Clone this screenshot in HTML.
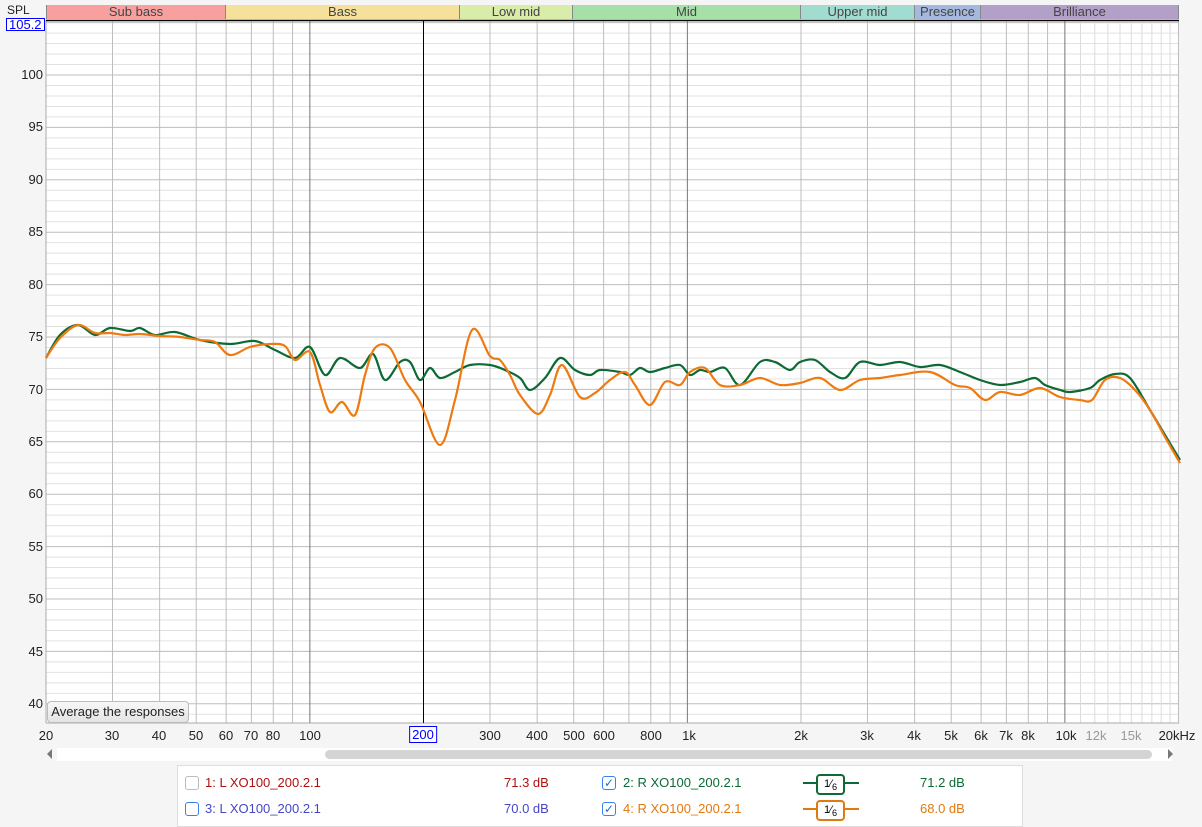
<!DOCTYPE html>
<html><head><meta charset="utf-8"><style>
body{margin:0;width:1202px;height:821px;background:#f5f5f5;font-family:"Liberation Sans",sans-serif;overflow:hidden;position:relative}
.a{position:absolute;white-space:nowrap}
.yl{position:absolute;right:1159px;font-size:13px;color:#222;transform:translateY(-8px)}
.xl{position:absolute;top:728px;font-size:13px;color:#222;transform:translateX(-50%)}
.band{position:absolute;top:5px;height:14px;font-size:13px;color:#444;text-align:center;line-height:14px;border-right:1px solid #888;box-sizing:border-box}
.leg{font-size:13px;position:absolute}
.cb{position:absolute;width:12px;height:12px;border:1px solid #bbb;border-radius:3px;background:#fff}
</style></head><body>
<div class="a" style="left:7px;top:3px;font-size:12px;color:#222">SPL</div>
<div class="band" style="left:46px;width:180px;background:#f8a0a0;border-left:1px solid #888">Sub bass</div>
<div class="band" style="left:226px;width:234px;background:#f5e19c">Bass</div>
<div class="band" style="left:460px;width:113px;background:#d9ecaa">Low mid</div>
<div class="band" style="left:573px;width:228px;background:#a6e0a8">Mid</div>
<div class="band" style="left:801px;width:114px;background:#a2dcd1">Upper mid</div>
<div class="band" style="left:915px;width:66px;background:#a5b8de">Presence</div>
<div class="band" style="left:981px;width:198px;background:#b3a0c8">Brilliance</div>
<svg id="g" class="a" style="left:0;top:0" width="1202" height="821"></svg>
<div class="a" style="left:6px;top:18px;border:1px solid #00f;background:#fff;color:#00f;font-size:13px;padding:0 2px;line-height:11px">105.2</div>
<div class="yl" style="top:75px">100</div><div class="yl" style="top:127px">95</div><div class="yl" style="top:180px">90</div><div class="yl" style="top:232px">85</div><div class="yl" style="top:285px">80</div><div class="yl" style="top:337px">75</div><div class="yl" style="top:390px">70</div><div class="yl" style="top:442px">65</div><div class="yl" style="top:494px">60</div><div class="yl" style="top:547px">55</div><div class="yl" style="top:599px">50</div><div class="yl" style="top:652px">45</div><div class="yl" style="top:704px">40</div>
<div class="xl" style="left:46px">20</div><div class="xl" style="left:112px">30</div><div class="xl" style="left:159px">40</div><div class="xl" style="left:196px">50</div><div class="xl" style="left:226px">60</div><div class="xl" style="left:251px">70</div><div class="xl" style="left:273px">80</div><div class="xl" style="left:310px">100</div>
<div class="xl" style="left:423px;top:726px;border:1px solid #00f;color:#00f;background:#fff;padding:0 2px;line-height:15px">200</div>
<div class="xl" style="left:490px">300</div><div class="xl" style="left:537px">400</div><div class="xl" style="left:574px">500</div><div class="xl" style="left:604px">600</div><div class="xl" style="left:651px">800</div><div class="xl" style="left:689px">1k</div><div class="xl" style="left:801px">2k</div><div class="xl" style="left:867px">3k</div><div class="xl" style="left:914px">4k</div><div class="xl" style="left:951px">5k</div><div class="xl" style="left:981px">6k</div><div class="xl" style="left:1006px">7k</div><div class="xl" style="left:1028px">8k</div><div class="xl" style="left:1066px">10k</div><div class="xl" style="left:1096px;color:#999">12k</div><div class="xl" style="left:1131px;color:#999">15k</div><div class="xl" style="left:1177px">20kHz</div>
<div class="a" style="left:47px;top:701px;width:140px;height:20px;border:1px solid #bbb;border-radius:4px;background:linear-gradient(#f8f8f8,#e4e4e4);font-size:13px;line-height:20px;text-align:center;color:#222">Average the responses</div>
<div class="a" style="left:57px;top:748px;width:1115px;height:13px;background:#fff"></div>
<div class="a" style="left:325px;top:750px;width:827px;height:9px;border-radius:5px;background:#d4d4d4"></div>
<div class="a" style="left:47px;top:749px;width:0;height:0;border:5px solid transparent;border-right:5px solid #777;border-left:0"></div>
<div class="a" style="left:1168px;top:749px;width:0;height:0;border:5px solid transparent;border-left:5px solid #777;border-right:0"></div>
<div class="a" style="left:177px;top:765px;width:844px;height:60px;background:#fff;border:1px solid #ddd"></div>
<div class="cb" style="left:185px;top:776px"></div>
<div class="leg" style="left:205px;top:775px;color:#b01010">1: L XO100_200.2.1</div>
<div class="leg" style="left:504px;top:775px;color:#b01010">71.3 dB</div>
<div class="cb" style="left:185px;top:802px;border-color:#3b82e8;border-width:1.5px"></div>
<div class="leg" style="left:205px;top:801px;color:#4646c8">3: L XO100_200.2.1</div>
<div class="leg" style="left:504px;top:801px;color:#4646c8">70.0 dB</div>
<div class="cb" style="left:602px;top:776px;border-color:#3b82e8;color:#1a6fe0;font-size:12px;line-height:12px;text-align:center">✓</div>
<div class="leg" style="left:623px;top:775px;color:#0d6a35">2: R XO100_200.2.1</div>
<div class="cb" style="left:602px;top:802px;border-color:#3b82e8;color:#1a6fe0;font-size:12px;line-height:12px;text-align:center">✓</div>
<div class="leg" style="left:623px;top:801px;color:#e07a10">4: R XO100_200.2.1</div>
<div class="a" style="left:803px;top:782px;width:56px;height:2px;background:#0d6a35"></div>
<div class="a" style="left:816px;top:774px;width:25px;height:17px;border:2px solid #0d6a35;border-radius:4px;background:#fff;font-size:11px;text-align:center;line-height:17px">1⁄<sub>6</sub></div>
<div class="a" style="left:803px;top:808px;width:56px;height:2px;background:#e07a10"></div>
<div class="a" style="left:816px;top:800px;width:25px;height:17px;border:2px solid #e07a10;border-radius:4px;background:#fff;font-size:11px;text-align:center;line-height:17px">1⁄<sub>6</sub></div>
<div class="leg" style="left:920px;top:775px;color:#0d6a35">71.2 dB</div>
<div class="leg" style="left:920px;top:801px;color:#e07a10">68.0 dB</div>
<script>
var s='',X=f=>46+377.5*Math.log10(f/20),Y=d=>75+(100-d)*10.48;
s+='<rect x="46" y="20" width="1133" height="703" fill="#fff"/>';
for(var d=38;d<=105;d++){var y=Y(d);if(y<21||y>723)continue;s+='<line x1="46" x2="1179" y1="'+y+'" y2="'+y+'" stroke="'+(d%5?'#e2e2e2':'#bdbdbd')+'"/>'}
var fs=[20,30,40,50,60,70,80,90,100,200,300,400,500,600,700,800,900,1000,2000,3000,4000,5000,6000,7000,8000,9000,10000,20000];
var lf=[11000,12000,13000,14000,15000,16000,17000,18000,19000];
lf.forEach(f=>{var x=X(f);s+='<line x1="'+x+'" x2="'+x+'" y1="20" y2="723" stroke="#dcdcdc"/>'});
fs.forEach(f=>{var x=X(f);var c=(f==100||f==1000||f==10000)?'#777':'#bdbdbd';s+='<line x1="'+x+'" x2="'+x+'" y1="20" y2="723" stroke="'+c+'"/>'});
s+='<line x1="46" x2="46" y1="20" y2="723" stroke="#aaa"/><line x1="46" x2="1179" y1="723" y2="723" stroke="#aaa"/>';
s+='<line x1="46" x2="1179" y1="20.5" y2="20.5" stroke="#000" stroke-width="1.5"/>';
s+='<line x1="423.5" x2="423.5" y1="20" y2="723" stroke="#000"/>';
function P(a){var d='M'+a[0][0]+','+a[0][1];for(var i=0;i<a.length-1;i++){var p0=a[i-1]||a[i],p1=a[i],p2=a[i+1],p3=a[i+2]||p2;d+='C'+(p1[0]+(p2[0]-p0[0])/6)+','+(p1[1]+(p2[1]-p0[1])/6)+' '+(p2[0]-(p3[0]-p1[0])/6)+','+(p2[1]-(p3[1]-p1[1])/6)+' '+p2[0]+','+p2[1]}return d}
var G=[[46,358],[60,335],[78,325],[95,335],[110,328],[130,331],[140,328],[155,335],[175,332],[200,340],[230,344],[255,341],[275,350],[295,358],[310,347],[325,375],[340,358],[360,368],[373,354],[385,380],[400,362],[410,362],[420,380],[430,368],[440,378],[455,372],[470,365],[490,365],[505,370],[520,378],[530,390],[545,378],[560,358],[575,370],[590,375],[600,370],[620,372],[630,375],[640,368],[650,372],[665,368],[680,365],[690,375],[700,370],[710,372],[725,368],[740,385],[760,362],[775,362],[790,370],[800,362],[815,360],[830,372],[845,378],[860,362],[880,365],[900,362],[920,367],[940,365],[960,372],[980,380],[1000,385],[1020,382],[1035,378],[1045,385],[1060,390],[1070,392],[1090,388],[1100,380],[1115,374],[1130,378],[1150,410],[1165,435],[1180,460]];
var O=[[46,358],[60,338],[78,325],[95,333],[110,333],[125,335],[140,334],[160,336],[180,337],[200,340],[215,342],[230,355],[250,347],[270,344],[285,346],[295,360],[310,352],[320,385],[330,412],[342,402],[355,415],[365,375],[375,348],[390,348],[405,380],[420,402],[440,445],[455,400],[472,330],[490,356],[500,360],[510,375],[520,395],[538,414],[550,395],[562,365],[580,397],[595,393],[610,380],[625,372],[635,385],[650,405],[665,382],[680,385],[690,372],[705,368],[720,385],[740,385],[760,378],[780,385],[800,383],[820,378],[840,390],[860,380],[880,378],[900,375],[930,372],[955,385],[970,388],[985,400],[1000,392],[1020,395],[1040,388],[1060,397],[1080,400],[1092,400],[1105,380],[1120,378],[1135,390],[1150,410],[1165,437],[1180,463]];
s+='<path d="'+P(G)+'" fill="none" stroke="#0d6a35" stroke-width="2.2"/>';
s+='<path d="'+P(O)+'" fill="none" stroke="#ee7a10" stroke-width="2.2"/>';
document.getElementById('g').innerHTML=s;
</script>
</body></html>
